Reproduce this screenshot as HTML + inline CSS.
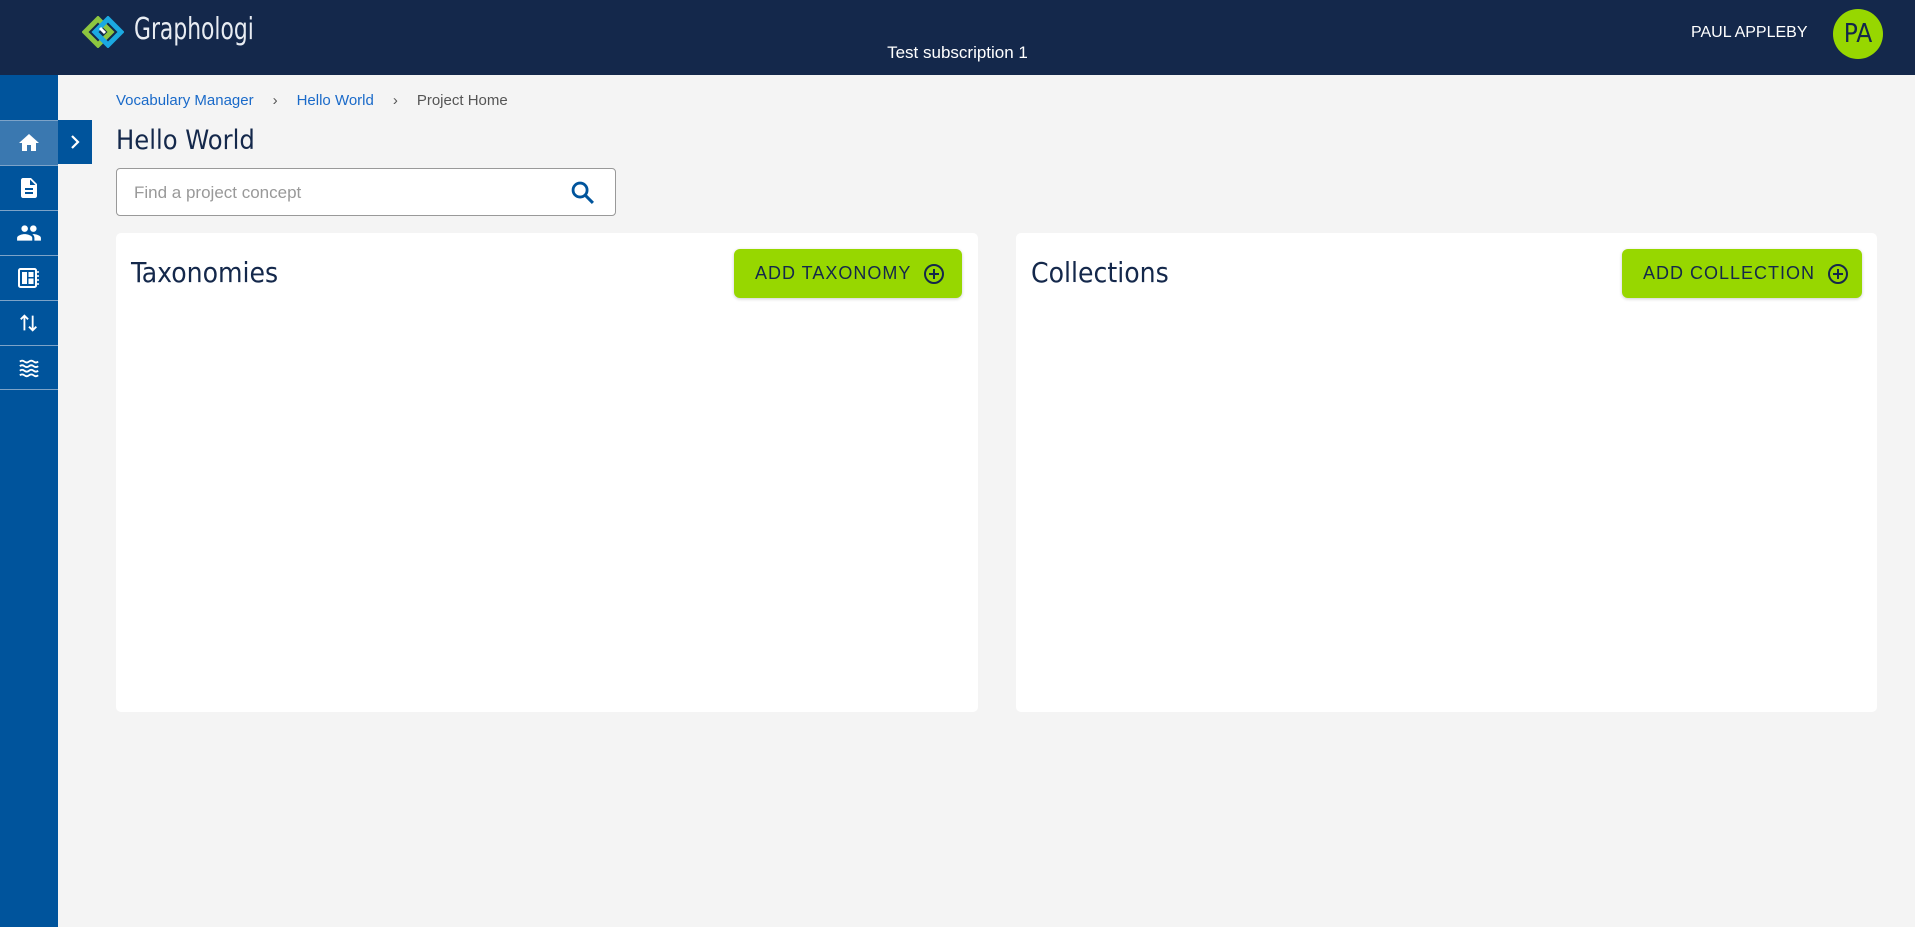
<!DOCTYPE html>
<html><head><meta charset="utf-8"><style>
*{box-sizing:border-box;margin:0;padding:0}
body{width:1915px;height:927px;overflow:hidden;background:#f4f4f4;font-family:"Liberation Sans",sans-serif;position:relative}
.hdr{position:absolute;left:0;top:0;width:1915px;height:75px;background:#14284b}
.brand{position:absolute;left:134px;top:12px;color:#e8ecf2;font-family:"Liberation Sans Narrow","DejaVu Sans Condensed",sans-serif;font-size:30px;transform:scaleX(0.81);transform-origin:0 0}
.sub{position:absolute;left:0;width:1915px;text-align:center;top:43px;color:#fff;font-size:17px}
.user{position:absolute;left:1691px;top:24px;color:#fff;font-size:16px}
.av{position:absolute;left:1833px;top:9px;width:50px;height:50px;border-radius:50%;background:#97d700;color:#14284b;font-family:"Liberation Sans Narrow","DejaVu Sans Condensed",sans-serif;font-size:26px;text-align:center;line-height:50px}
.side{position:absolute;left:0;top:75px;width:58px;height:852px;background:#00549c}
.it{position:absolute;left:0;width:58px;height:45px;border-top:1px solid #7da3c8;display:flex;align-items:center;justify-content:center}
.tab{position:absolute;left:58px;top:120px;width:34px;height:44px;background:#00549c;display:flex;align-items:center;justify-content:center}
.bc{position:absolute;left:116px;top:92px;font-size:15px;color:#555}
.bc a{color:#1a6ac9;text-decoration:none}
.bc .s{margin:0 19px;color:#555}
h1{position:absolute;left:116px;top:125px;font-weight:normal;font-family:"Liberation Sans Narrow","DejaVu Sans Condensed",sans-serif;font-size:27px;color:#14284b}
.srch{position:absolute;left:116px;top:168px;width:500px;height:48px;background:#fff;border:1px solid #999;border-radius:4px}
.srch span{position:absolute;left:17px;top:14px;color:#999;font-size:17px}
.card{position:absolute;top:233px;height:479px;background:#fff;border-radius:5px}
.card h2{position:absolute;left:15px;top:23px;font-weight:normal;font-family:"Liberation Sans Narrow","DejaVu Sans Condensed",sans-serif;font-size:28px;color:#14284b}
.btn{position:absolute;top:16px;height:49px;background:#97d700;border-radius:6px;color:#14284b;font-size:18px;letter-spacing:1px;display:flex;align-items:center;padding-left:21px;box-shadow:0 1px 3px rgba(0,0,0,.2)}
.btn svg{margin-left:12px}
</style></head><body>
<div class="hdr">
<svg style="position:absolute;left:82px;top:16px" width="42" height="32" viewBox="0 0 42 32">
<path d="M16 3 L29 16 L16 29 L3 16 Z" fill="none" stroke="#8dc63f" stroke-width="5"/>
<path d="M26 3 L39 16 L26 29 L13 16 Z" fill="none" stroke="#1ba9e1" stroke-width="5"/>
<path d="M18 12 L23 17" stroke="#fff" stroke-width="3"/>
</svg>
<div class="brand">Graphologi</div>
<div class="sub">Test subscription 1</div>
<div class="user">PAUL APPLEBY</div>
<div class="av">PA</div>
</div>
<div class="side">
<div class="it" style="top:45px;background:#3a78b0"><svg width="26" height="24" viewBox="0 0 24 24"><path fill="#fff" d="M10 20v-6h4v6h5v-8h3L12 3 2 12h3v8z"/></svg></div>
<div class="it" style="top:90px"><svg width="24" height="26" viewBox="0 0 24 24"><path fill="#fff" d="M14 2H6c-1.1 0-2 .9-2 2v16c0 1.1.9 2 2 2h12c1.1 0 2-.9 2-2V8l-6-6zm2 16H8v-2h8v2zm0-4H8v-2h8v2zm-3-5V3.5L18.5 9H13z"/></svg></div>
<div class="it" style="top:135px"><svg width="28" height="26" viewBox="0 0 24 24"><path fill="#fff" d="M16 11c1.66 0 2.99-1.34 2.99-3S17.66 5 16 5c-1.66 0-3 1.34-3 3s1.34 3 3 3zm-8 0c1.66 0 2.990-1.34 2.99-3S9.66 5 8 5C6.34 5 5 6.34 5 8s1.34 3 3 3zm0 2c-2.33 0-7 1.17-7 3.5V19h14v-2.5c0-2.33-4.67-3.5-7-3.5zm8 0c-.29 0-.62.02-.97.05 1.16.84 1.970 1.97 1.97 3.45V19h6v-2.5c0-2.33-4.67-3.5-7-3.5z"/></svg></div>
<div class="it" style="top:180px"><svg width="24" height="24" viewBox="0 0 24 24"><rect x="2" y="3" width="17" height="18" rx="1.5" fill="none" stroke="#fff" stroke-width="2"/><rect x="5" y="6" width="5" height="12" fill="#fff"/><rect x="11.5" y="6" width="5" height="5" fill="#fff"/><rect x="11.5" y="12.5" width="5" height="5.5" fill="#fff"/><path d="M20 6h2M20 10h2M20 14h2M20 18h2" stroke="#fff" stroke-width="1.5"/></svg></div>
<div class="it" style="top:225px"><svg width="22" height="24" viewBox="0 0 24 24"><path d="M7 20V4M3 8l4-4 4 4M16 4v16M12 16l4 4 4-4" fill="none" stroke="#fff" stroke-width="2"/></svg></div>
<div class="it" style="top:270px;border-bottom:1px solid #7da3c8"><svg width="24" height="22" viewBox="0 0 24 24"><path d="M2 5q2.5-2 5 0t5 0 5 0 5 0M2 10q2.5-2 5 0t5 0 5 0 5 0M2 15q2.5-2 5 0t5 0 5 0 5 0M2 20q2.5-2 5 0t5 0 5 0 5 0" fill="none" stroke="#fff" stroke-width="2"/></svg></div>
</div>
<div class="tab"><svg width="14" height="18" viewBox="0 0 14 18"><path d="M4 3l6 6-6 6" fill="none" stroke="#fff" stroke-width="2.2"/></svg></div>
<div class="bc"><a>Vocabulary Manager</a><span class="s">›</span><a>Hello World</a><span class="s">›</span>Project Home</div>
<h1>Hello World</h1>
<div class="srch"><span>Find a project concept</span>
<svg style="position:absolute;left:452px;top:10px" width="28" height="28" viewBox="0 0 24 24"><circle cx="9.5" cy="9.5" r="6" fill="none" stroke="#00549c" stroke-width="2.4"/><path d="M14 14l6.5 6.5" stroke="#00549c" stroke-width="2.6"/></svg></div>
<div class="card" style="left:116px;width:862px"><h2>Taxonomies</h2>
<div class="btn" style="left:618px;width:228px">ADD TAXONOMY<svg width="22" height="22" viewBox="0 0 22 22"><circle cx="11" cy="11" r="9" fill="none" stroke="#14284b" stroke-width="2"/><path d="M11 6v10M6 11h10" stroke="#14284b" stroke-width="2"/></svg></div></div>
<div class="card" style="left:1016px;width:861px"><h2>Collections</h2>
<div class="btn" style="left:606px;width:240px">ADD COLLECTION<svg width="22" height="22" viewBox="0 0 22 22"><circle cx="11" cy="11" r="9" fill="none" stroke="#14284b" stroke-width="2"/><path d="M11 6v10M6 11h10" stroke="#14284b" stroke-width="2"/></svg></div></div>
</body></html>
